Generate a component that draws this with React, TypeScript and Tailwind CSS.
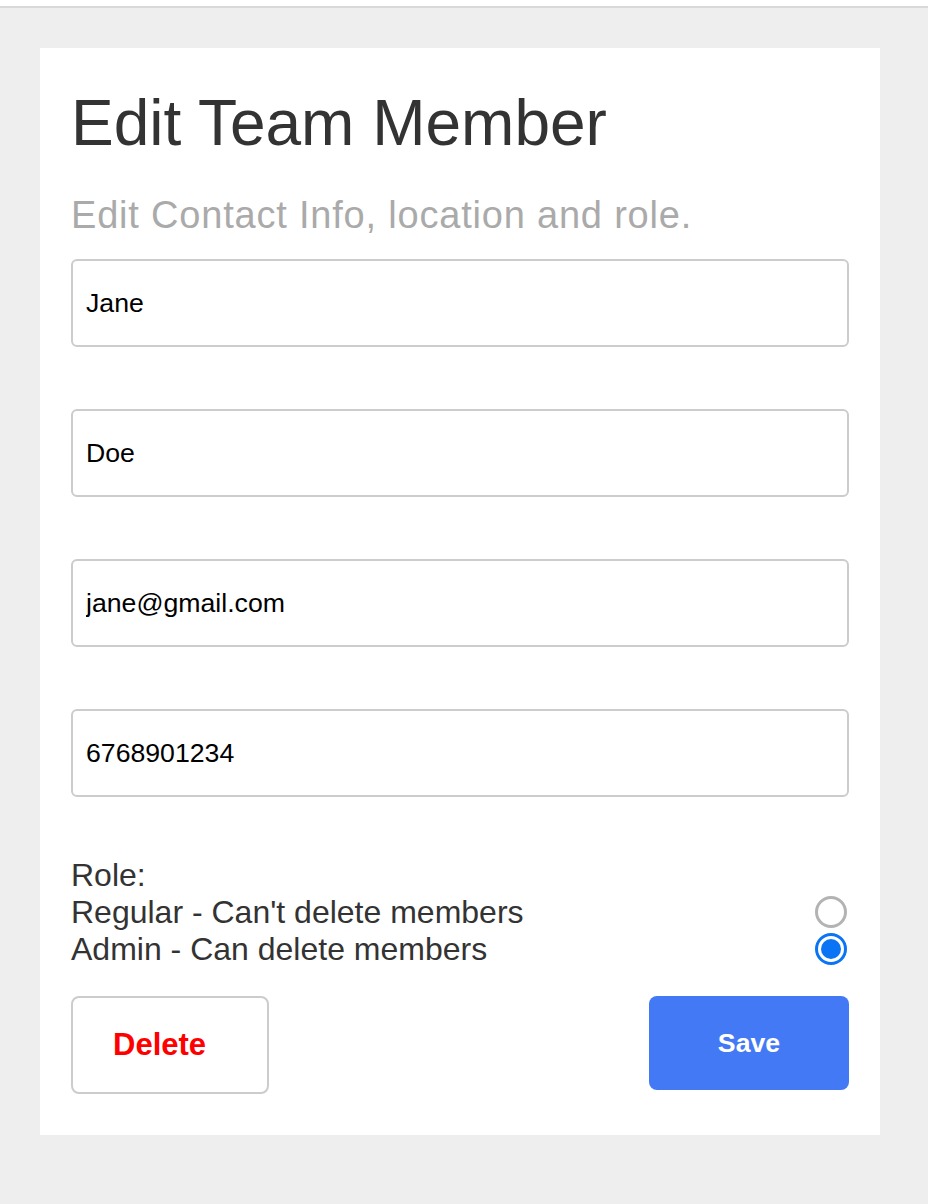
import React from 'react';

const fields = ['Jane', 'Doe', 'jane@gmail.com', '6768901234'];

const roles = [
  { label: "Regular - Can't delete members", checked: false },
  { label: 'Admin - Can delete members', checked: true },
];

function Radio({ checked }: { checked: boolean }) {
  if (checked) {
    return (
      <span className="mr-[2px] flex h-[32px] w-[32px] items-center justify-center rounded-full border-[3px] border-[#0a74f5] bg-white">
        <span className="h-[20px] w-[20px] rounded-full bg-[#0a74f5]" />
      </span>
    );
  }
  return <span className="mr-[2px] h-[32px] w-[32px] rounded-full border-[3px] border-[#b3b3b3] bg-white" />;
}

export default function App() {
  return (
    <div className="min-h-screen bg-[#eeeeee] font-['Liberation_Sans',Arial,sans-serif]">
      <div className="h-[6px] bg-white" />
      <div className="h-[2px] bg-[#d9d9d9]" />
      <div className="px-[40px] pt-[40px] pb-[68px]">
        <div className="w-[840px] bg-white px-[31px] pt-[38px] pb-[41px]">
          <h1 className="text-[64px] leading-[74px] text-[#333333]">Edit Team Member</h1>
          <p className="mt-[35px] text-[38px] leading-[40px] tracking-[0.8px] text-[#aaaaaa]">
            Edit Contact Info, location and role.
          </p>

          <div className="mt-[24px] flex flex-col gap-[62px]">
            {fields.map((f) => (
              <input
                key={f}
                defaultValue={f}
                className="h-[88px] w-full rounded-[6px] border-2 border-[#cccccc] px-[13px] text-[26.67px] text-black outline-none"
              />
            ))}
          </div>

          <div className="mt-[60px] text-[32px] leading-[36.8px] text-[#333333]">
            <div>Role:</div>
            {roles.map((r) => (
              <div key={r.label} className="flex items-center justify-between">
                <span>{r.label}</span>
                <Radio checked={r.checked} />
              </div>
            ))}
          </div>

          <div className="mt-[29px] flex items-start justify-between">
            <button className="h-[98px] w-[198px] rounded-[8px] border-2 border-[#cccccc] bg-white pl-[40px] text-left text-[31px] font-bold text-[#ff0000]">
              Delete
            </button>
            <button className="h-[94px] w-[200px] rounded-[8px] bg-[#4479f6] text-[26.67px] font-bold text-white">
              Save
            </button>
          </div>
        </div>
      </div>
    </div>
  );
}
